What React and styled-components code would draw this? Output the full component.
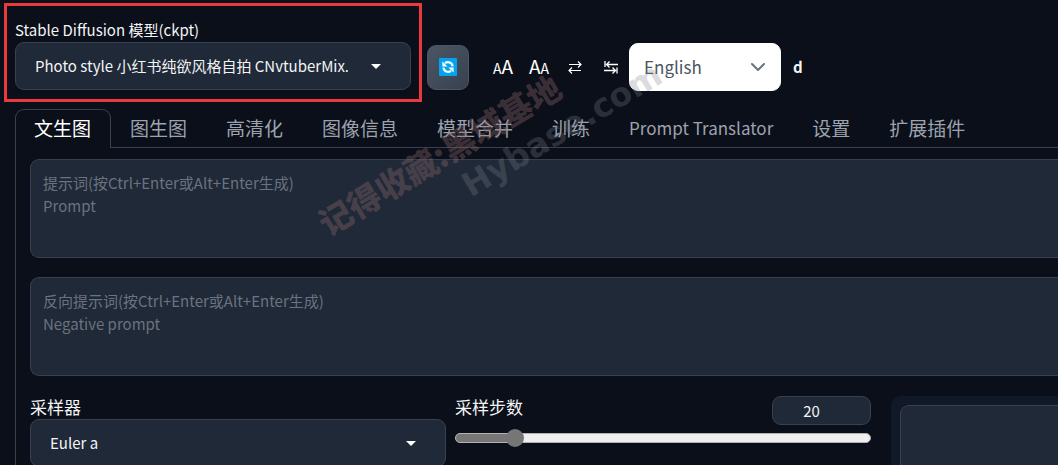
import React, { useState } from "react";
import styled, { createGlobalStyle, css } from "styled-components";

const colors = {
  page: "#0b0f19",
  panel: "#111827",
  field: "#1f2937",
  line: "#374151",
  text: "#f3f4f6",
  muted: "#9ca3af",
  placeholder: "#6b7280",
  mark: "#e83a3c"
};

const GlobalStyle = createGlobalStyle`
  * {
    box-sizing: border-box;
  }
  body {
    margin: 0;
    overflow: hidden;
    background: ${colors.page};
    color: ${colors.text};
    font: 15px/22px "Noto Sans CJK SC", "Noto Sans", sans-serif;
  }
  button, input, select, textarea {
    font: inherit;
    color: inherit;
    margin: 0;
  }
`;

const Page = styled.main`
  position: relative;
  height: 100vh;
  overflow: hidden;
`;

const Toolbar = styled.header`
  display: flex;
  align-items: flex-end;
  padding: 3px 4px 0;
`;

const Highlight = styled.div`
  flex: 0 1 418px;
  min-width: 0;
  padding: 13px 8px 9px;
  border: 3px solid ${colors.mark};
`;

const Label = styled.label`
  display: block;
  margin-bottom: 1px;
  line-height: 22px;
  white-space: nowrap;
`;

const SelectBox = styled.div`
  display: grid;
  align-items: center;
  min-width: 0;

  > * {
    grid-area: 1 / 1;
  }
  > svg {
    justify-self: end;
    margin-right: ${props => (props.$light ? 15 : 30)}px;
    pointer-events: none;
  }
`;

const Select = styled.select`
  appearance: none;
  width: 100%;
  min-width: 0;
  height: 48px;
  padding: 0 62px 0 19px;
  border: 1px solid ${colors.line};
  border-radius: 9px;
  background: ${colors.field};
  outline: none;

  ${props =>
    props.$light &&
    css`
      padding: 0 36px 0 14px;
      border-color: #fff;
      background: #fff;
      color: #4b5563;
      font-size: 17px;
    `}
`;

const Actions = styled.div`
  display: flex;
  align-items: center;
  height: 48px;
  margin: 0 0 11px 5px;
`;

const RefreshButton = styled.button`
  display: grid;
  place-items: center;
  width: 42px;
  height: 45px;
  margin-right: 16px;
  padding: 0;
  border: 1px solid #4b5563;
  border-radius: 9px;
  background: linear-gradient(to bottom right, #4b5563, #374151);
`;

const ToolButton = styled.button`
  display: flex;
  align-items: baseline;
  justify-content: center;
  width: 36px;
  padding: 0;
  border: 0;
  background: none;
  color: #fff;
  line-height: 24px;
`;

const Letter = styled.span`
  font-size: ${props => (props.$big ? 19 : 14)}px;
`;

const Language = styled.div`
  width: 152px;
`;

const Status = styled.strong`
  margin-left: 12px;
`;

const Tabs = styled.nav`
  display: flex;
  margin: 7px 0 0 15px;
  border-bottom: 1px solid ${colors.line};
`;

const Tab = styled.button`
  height: 39px;
  margin-bottom: -1px;
  padding: 0 19px 2px 18px;
  border: 1px solid transparent;
  border-bottom: 0;
  border-radius: 9px 9px 0 0;
  background: none;
  color: ${colors.muted};
  font-size: ${props => (props.$latin ? 17 : 19)}px;
  white-space: nowrap;

  ${props =>
    props.$active &&
    css`
      border-color: ${colors.line};
      background: ${colors.page};
      color: #fff;
    `}
`;

const Panel = styled.section`
  display: flex;
  flex-direction: column;
  gap: 19px;
  margin-left: 15px;
  padding: 11px 0 40px 14px;
  border-left: 1px solid ${colors.line};
`;

const PromptInput = styled.textarea`
  display: block;
  width: 100%;
  height: 99px;
  padding: 11px 12px;
  border: 1px solid ${colors.line};
  border-right: 0;
  border-radius: 9px 0 0 9px;
  background: ${colors.field};
  line-height: 23px;
  resize: none;
  outline: none;

  &::placeholder {
    color: ${colors.placeholder};
    opacity: 1;
  }
`;

const Settings = styled.div`
  display: grid;
  grid-template-columns: 416fr 416fr 178fr;
  column-gap: 9px;
  margin-top: 1px;
`;

const SamplerLabel = styled(Label)`
  font-size: 17px;
`;

const StepsHead = styled.div`
  display: flex;
  justify-content: space-between;
  height: 29px;
`;

const StepsInput = styled.input`
  width: 99px;
  height: 29px;
  padding: 0 20px 0 0;
  border: 1px solid ${colors.line};
  border-radius: 9px;
  background: ${colors.field};
  text-align: center;
  appearance: textfield;
  outline: none;

  &::-webkit-inner-spin-button {
    display: none;
  }
`;

const Range = styled.input`
  appearance: none;
  display: block;
  width: 100%;
  height: 10px;
  margin-top: 8px;
  border: 1px solid #b2b2b2;
  border-radius: 5px;
  background: linear-gradient(#767676, #767676) 0 0 / var(--filled) 100% no-repeat #efefef;

  &::-webkit-slider-thumb {
    appearance: none;
    width: 18px;
    height: 18px;
    border-radius: 50%;
    background: #767676;
  }
`;

const Output = styled.div`
  min-height: 120px;
  margin-left: 11px;
  padding: 9px 0 0 9px;
  border-radius: 9px 0 0 0;
  background: ${colors.panel};
`;

const Preview = styled.div`
  height: 100%;
  border: 1px solid ${colors.line};
  border-width: 1px 0 0 1px;
  border-radius: 9px 0 0 0;
  background: ${colors.field};
`;

const Watermark = styled.div`
  position: absolute;
  top: ${props => props.$top}px;
  left: ${props => props.$left}px;
  transform: translate(-50%, -50%) rotate(-31deg);
  color: ${props => props.$color};
  font: ${props => props.$font};
  white-space: pre;
  pointer-events: none;
`;

const Caret = () => (
  <svg width="10" height="5" viewBox="0 0 10 5" aria-hidden="true">
    <path d="M0 0h10L5 5z" fill="#fff" />
  </svg>
);

const Chevron = () => (
  <svg width="16" height="10" viewBox="0 0 16 10" fill="none" aria-hidden="true">
    <path d="M2 2l6 6 6-6" stroke="#6b7280" strokeWidth="2" strokeLinecap="round" strokeLinejoin="round" />
  </svg>
);

const RefreshIcon = () => (
  <svg width="20" height="20" viewBox="0 0 20 20" fill="none" aria-hidden="true">
    <rect x="1" y="1" width="18" height="18" rx="1" fill="#00a4ef" />
    <path d="M14.6 9.3A4.7 4.7 0 0 0 7 6.2M5.4 10.7A4.7 4.7 0 0 0 13 13.8" stroke="#fff" strokeWidth="2.2" />
    <path d="M4.4 4.4v5.2h5.2zM15.6 15.6v-5.2h-5.2z" fill="#fff" />
  </svg>
);

const SwapIcon = () => (
  <svg width="14" height="14" viewBox="0 0 14 14" fill="none" stroke="#fff" strokeWidth="1.2" aria-hidden="true">
    <path d="M1 4.5h12M10 1.5l3 3-3 3M13 10.5H1M4 7.5l-3 3 3 3" />
  </svg>
);

const TabKeyIcon = () => (
  <svg width="14" height="14" viewBox="0 0 14 14" fill="none" stroke="#fff" strokeWidth="1.3" aria-hidden="true">
    <path d="M1 1v6M14 4.5H2.5M5.5 1.5l-3 3 3 3M13 7.5v6M0 10.5h11.5M8.5 7.5l3 3-3 3" />
  </svg>
);

const tabs = [
  "文生图",
  "图生图",
  "高清化",
  "图像信息",
  "模型合并",
  "训练",
  "Prompt Translator",
  "设置",
  "扩展插件"
];

const MIN_STEPS = 1;
const MAX_STEPS = 150;

export default function App() {
  const [active, setActive] = useState(tabs[0]);
  const [steps, setSteps] = useState(20);
  const filled = ((steps - MIN_STEPS) / (MAX_STEPS - MIN_STEPS)) * 100;
  const onSteps = e => setSteps(Number(e.target.value));

  return (
    <Page>
      <GlobalStyle />
      <Toolbar>
        <Highlight>
          <Label htmlFor="model">Stable Diffusion 模型(ckpt)</Label>
          <SelectBox>
            <Select id="model">
              <option>Photo style 小红书纯欲风格自拍 CNvtuberMix.ckpt</option>
            </Select>
            <Caret />
          </SelectBox>
        </Highlight>
        <Actions>
          <RefreshButton aria-label="刷新">
            <RefreshIcon />
          </RefreshButton>
          <ToolButton>
            <Letter>A</Letter>
            <Letter $big>A</Letter>
          </ToolButton>
          <ToolButton>
            <Letter $big>A</Letter>
            <Letter>A</Letter>
          </ToolButton>
          <ToolButton aria-label="swap">
            <SwapIcon />
          </ToolButton>
          <ToolButton aria-label="tab">
            <TabKeyIcon />
          </ToolButton>
          <Language>
            <SelectBox $light>
              <Select $light aria-label="Language">
                <option>English</option>
              </Select>
              <Chevron />
            </SelectBox>
          </Language>
          <Status>d</Status>
        </Actions>
      </Toolbar>

      <Tabs>
        {tabs.map(name => (
          <Tab
            key={name}
            $active={name === active}
            $latin={name === "Prompt Translator"}
            onClick={() => setActive(name)}
          >
            {name}
          </Tab>
        ))}
      </Tabs>

      <Panel>
        <PromptInput
          aria-label="Prompt"
          placeholder={"提示词(按Ctrl+Enter或Alt+Enter生成)\nPrompt"}
        />
        <PromptInput
          aria-label="Negative prompt"
          placeholder={"反向提示词(按Ctrl+Enter或Alt+Enter生成)\nNegative prompt"}
        />
        <Settings>
          <div>
            <SamplerLabel htmlFor="sampler">采样器</SamplerLabel>
            <SelectBox>
              <Select id="sampler">
                <option>Euler a</option>
              </Select>
              <Caret />
            </SelectBox>
          </div>
          <div>
            <StepsHead>
              <SamplerLabel htmlFor="steps">采样步数</SamplerLabel>
              <StepsInput
                id="steps"
                type="number"
                min={MIN_STEPS}
                max={MAX_STEPS}
                value={steps}
                onChange={onSteps}
              />
            </StepsHead>
            <Range
              type="range"
              aria-label="采样步数"
              min={MIN_STEPS}
              max={MAX_STEPS}
              value={steps}
              onChange={onSteps}
              style={{ "--filled": `${filled}%` }}
            />
          </div>
          <Output>
            <Preview />
          </Output>
        </Settings>
      </Panel>

      <Watermark
        $top={154}
        $left={439}
        $color="rgba(138, 102, 104, 0.38)"
        $font='900 33px/40px "Noto Sans CJK SC", sans-serif'
      >
        记得收藏:黑域基地
      </Watermark>
      <Watermark
        $top={130}
        $left={562}
        $color="rgba(128, 132, 142, 0.28)"
        $font='bold 33px/40px "DejaVu Sans", sans-serif'
      >
        Hybase.com
      </Watermark>
    </Page>
  );
}
